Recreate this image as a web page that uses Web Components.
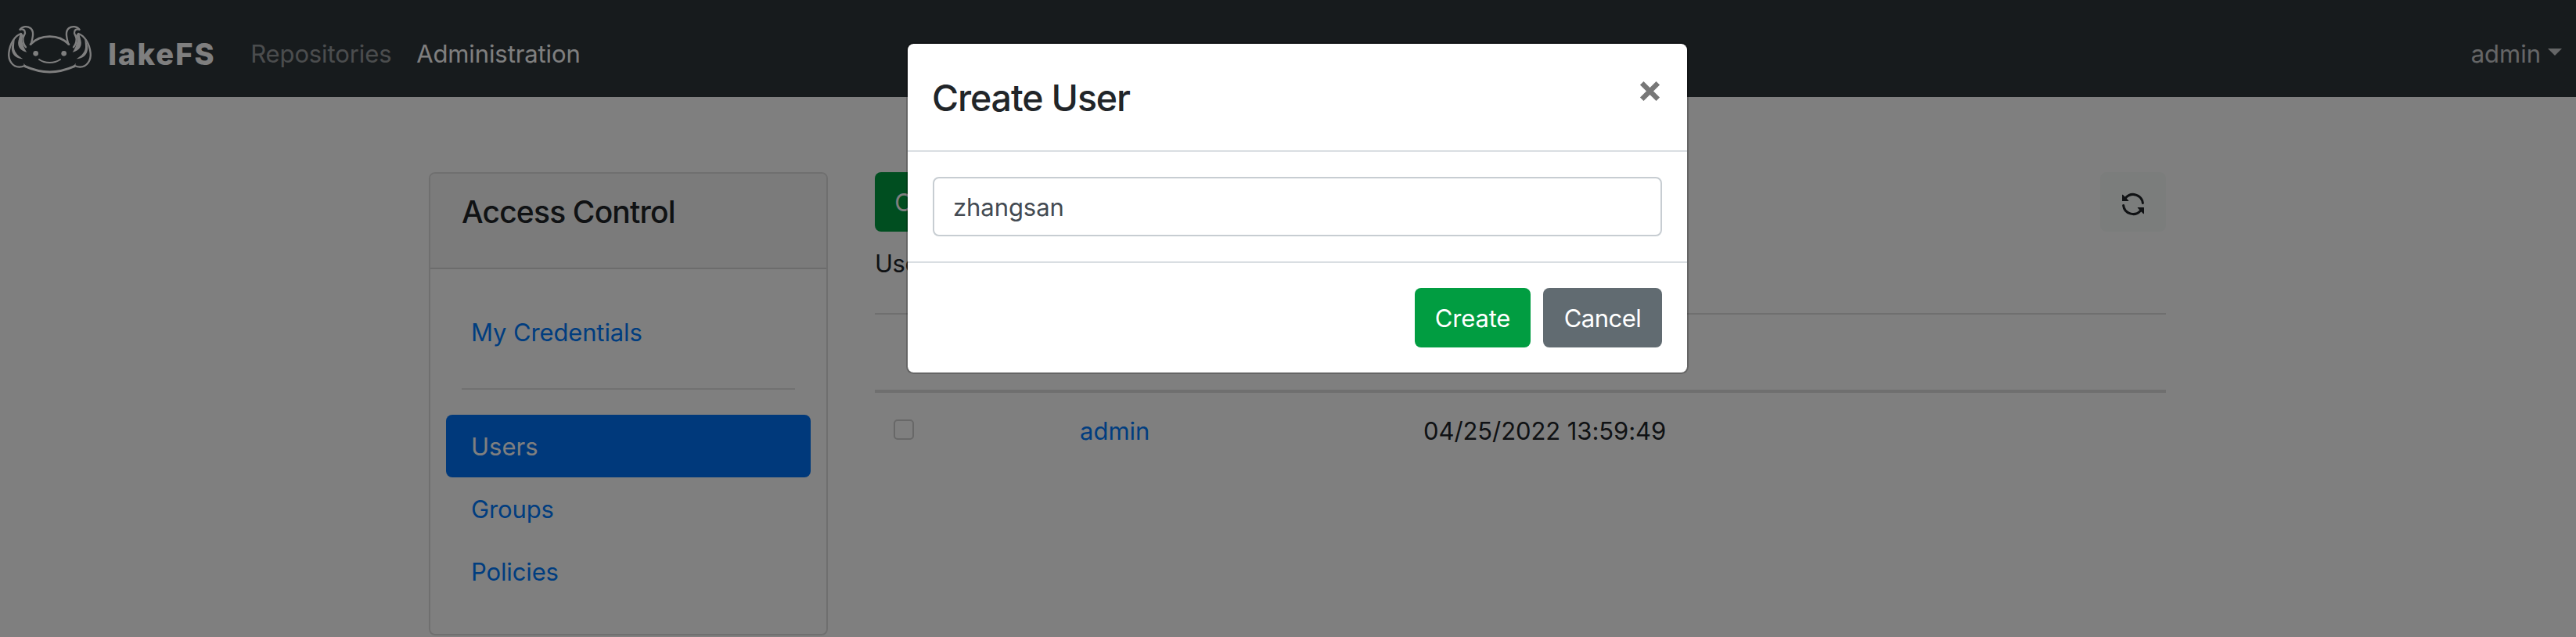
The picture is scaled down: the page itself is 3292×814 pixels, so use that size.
<!DOCTYPE html>
<html lang="en">
<head>
<meta charset="utf-8">
<title>lakeFS</title>
<style>
html,body{margin:0;height:100%;overflow:hidden}
body{font:400 31px/48px Inter,"Liberation Sans",sans-serif;color:#212529;background:#fff}
</style>
</head>
<body>
<lake-app></lake-app>
<script>
function define(name, html) {
  const t = document.createElement('template');
  t.innerHTML = html;
  customElements.define(name, class extends HTMLElement {
    constructor() {
      super();
      this.attachShadow({mode: 'open'}).appendChild(t.content.cloneNode(true));
    }
  });
}

define('lake-logo', `
<style>
:host{display:flex;align-items:flex-start;color:#fff}
svg{display:block;width:110.67px;height:64px;margin-top:30.67px}
b{font:800 38px/48px Inter,sans-serif;letter-spacing:2.1px;margin:45px 0 0 19.5px;width:135px;white-space:nowrap}
</style>
<svg viewBox="24 20 332 192" fill="none" stroke="currentColor" stroke-width="7" stroke-linejoin="round" stroke-linecap="round">
  <defs>
    <g id="side">
      <path d="M77 40C85 28 105 26 117 35C131 47 127 66 119 96"/>
      <path d="M77 40C90 37 97 43 96 54C94 63 88 66 88 77C88 88 91 98 99 108"/>
      <path d="M80 56C58 64 38 92 34 130C31 158 48 184 74 184C83 184 88 182 95 179"/>
      <path d="M80 56C78 66 76 70 76 80" stroke-width="6"/>
      <path stroke="none" fill="currentColor" d="M83 54L74 72C62 100 74 122 103 127C92 112 91 104 87 92C82 80 86 70 90 63Z"/>
      <path stroke="none" fill="currentColor" d="M56 78C38 100 36 150 88 153C66 140 52 124 54 102Z"/>
      <path stroke="none" fill="currentColor" d="M91 169C91 178 93 184 98 186L108 184C99 180 95 175 91 169Z"/>
    </g>
  </defs>
  <use href="#side"/>
  <use href="#side" transform="matrix(-1 0 0 1 381 0)"/>
  <path d="M117 97C135 78 162 67 190.500 67C219 67 246 78 264 97" stroke-width="8"/>
  <path d="M95 181C125 194 155 203 190.500 203C226 203 256 194 286 181" stroke-width="8.500"/>
  <path d="M150 155C172 171 208 171 231 155" stroke-width="6"/>
  <g fill="currentColor" stroke="none"><circle cx="137" cy="132" r="10"/><circle cx="245" cy="132" r="10"/></g>
</svg>
<b>lakeFS</b>`);

define('lake-navbar', `
<style>
:host{display:flex;height:124px;padding:0 16px 0 8px;background:#2f363b;box-sizing:border-box}
nav{display:flex;gap:32px;padding:45px 0 0 47px;letter-spacing:-.107px;color:#fff}
.dim{color:rgba(255,255,255,.5);width:180px}
.user{margin-left:auto;padding-top:45px;display:flex;color:#fff;opacity:.75}
i{width:0;height:0;border:9.500px solid transparent;border-top-color:currentColor;border-bottom:0;margin:17px 2px 0 9px}
</style>
<lake-logo></lake-logo>
<nav><span class="dim">Repositories</span><span>Administration</span></nav>
<div class="user">admin<i></i></div>`);

define('nav-item', `
<style>
:host{display:block;height:80px;padding:2px 32px 0;margin:0 20px;box-sizing:border-box;border-radius:8px;color:#007bff;line-height:78px;letter-spacing:-.13px}
:host([active]){background:#0072f6;color:#fff;letter-spacing:.03px}
</style><slot></slot>`);

define('access-menu', `
<style>
:host{display:block;width:510px;height:592px;box-sizing:border-box;border:2px solid #dfdfdf;border-radius:8px}
header{height:122px;box-sizing:border-box;padding:25px 40px 0;border-bottom:2px solid #d8d8d8;background:#f7f7f7;border-radius:6px 6px 0 0;font-size:39px;font-weight:500;letter-spacing:-.83px}
hr{border:0;border-top:2px solid #e3e3e3;margin:32px 40px}
nav{padding-top:40px}
</style>
<header>Access Control</header>
<nav>
  <nav-item>My Credentials</nav-item>
  <hr>
  <nav-item active>Users</nav-item>
  <nav-item>Groups</nav-item>
  <nav-item>Policies</nav-item>
</nav>`);

define('lake-button', `
<style>
:host{display:flex;align-items:center;justify-content:center;height:76px;padding-top:2px;box-sizing:border-box;border-radius:8px;background:#019d41;color:#fff;white-space:nowrap;letter-spacing:-.18px}
:host([kind=secondary]){background:#616b71;letter-spacing:-.53px}
:host([kind=light]){background:#f6faf8;color:#212529}
</style><slot></slot>`);

define('users-panel', `
<style>
:host{display:block;width:1650px}
.bar{display:flex;justify-content:space-between}
.bar lake-button:first-child{width:224px}
.bar lake-button:last-child{width:84px}
svg{width:32px;height:32px;fill:currentColor;margin-top:4px}
p{margin:17px 0 39px;letter-spacing:-.5px}
.head{height:96px;border-top:2px solid #dedede;border-bottom:4px solid #dedede}
.row{display:grid;grid-template-columns:238px 439px 1fr;height:96px;padding-top:25px;box-sizing:border-box}
.row>*{padding-left:24px}
.box{display:block;width:26px;height:26px;box-sizing:border-box;border:2px solid #d0d0d0;border-radius:5px;margin-top:9px}
.link{color:#007bff}
.date{letter-spacing:-.08px}
</style>
<div class="bar">
  <lake-button>Create User</lake-button>
  <lake-button kind="light"><svg viewBox="0 0 16 16"><path d="M1.705 8.005a.75.75 0 01.834.656 5.500 5.500 0 009.592 2.970l-1.204-1.204a.25.25 0 01.177-.427h3.646a.25.25 0 01.25.25v3.646a.25.25 0 01-.427.177l-1.380-1.380A7.001 7.001 0 011.050 8.840a.75.75 0 01.656-.834zM8 2.500a5.487 5.487 0 00-4.131 1.869l1.204 1.204A.25.25 0 014.896 6H1.250A.25.25 0 011 5.750V2.104a.25.25 0 01.427-.177l1.380 1.380A7.001 7.001 0 0114.950 7.160a.75.75 0 11-1.490.178A5.501 5.501 0 008 2.500z"/></svg></lake-button>
</div>
<p>Users</p>
<div class="head"></div>
<div class="row"><span><i class="box"></i></span><span class="link">admin</span><span class="date">04/25/2022 13:59:49</span></div>`);

define('create-user-dialog', `
<style>
:host{display:block;width:996px;height:420px;background:#fff;border:2px solid rgba(0,0,0,.2);background-clip:padding-box;border-radius:9.600px}
header{display:flex;justify-content:space-between;height:138px;box-sizing:border-box;padding:33px 34px 0 31px;border-bottom:2px solid #d9dee2}
h4{margin:0;font:500 46.500px/72px Inter,sans-serif;letter-spacing:-1.120px}
svg{width:27px;height:27px;margin-top:14px}
.body{padding:32px;height:142px;box-sizing:border-box;border-bottom:2px solid #d9dee2}
.field{height:76px;box-sizing:border-box;border:2px solid #c7cdd2;border-radius:8px;padding:13px 24px 0;color:#434a52;letter-spacing:-.065px}
footer{display:flex;justify-content:flex-end;gap:16px;padding:32px}
footer lake-button:first-child{width:148px}
footer lake-button:last-child{width:152px}
</style>
<header><h4>Create User</h4><svg viewBox="0 0 27 27"><path d="M3.200 3.200L23.800 23.800M23.800 3.200L3.200 23.800" stroke="#777" stroke-width="6.400"/></svg></header>
<div class="body"><div class="field">zhangsan</div></div>
<footer><lake-button>Create</lake-button><lake-button kind="secondary">Cancel</lake-button></footer>`);

define('lake-app', `
<style>
:host{display:block;position:relative;height:814px;overflow:hidden}
main{display:flex;gap:60px;padding:96px 0 0 548px}
.backdrop{position:absolute;inset:0;background:rgba(0,0,0,.5);display:flex;justify-content:center;align-items:flex-start;padding-top:54px;box-sizing:border-box}
create-user-dialog{margin-left:24px}
</style>
<lake-navbar></lake-navbar>
<main><access-menu></access-menu><users-panel></users-panel></main>
<div class="backdrop"><create-user-dialog></create-user-dialog></div>`);
</script>
</body>
</html>
